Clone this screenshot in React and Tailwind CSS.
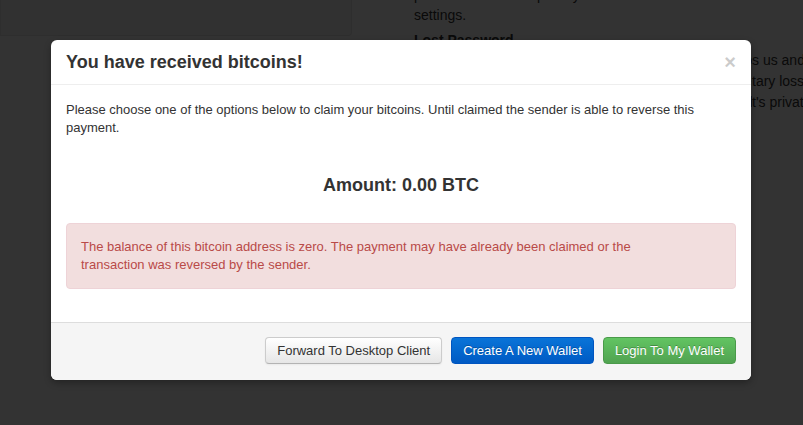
const hiddenLines = [
  { head: 'We do not store your password. If you lose it and the owner contact', tail: 's us and we cannot help' },
  { head: 'We cannot be held liable for any funds lost or any other mone', tail: 'tary loss' },
  { head: 'that occurs as a result of you losing access to your walle', tail: "t's private key" },
];

export default function App() {
  return (
    <div className="relative h-[425px] w-full overflow-hidden bg-white font-['Liberation_Sans',Arial,sans-serif] text-[#333]">
      {/* page behind the dialog */}
      <div className="flex items-start">
        <div className="h-[36px] w-[352px] shrink-0 rounded-br border border-t-0 border-[#e3e3e3] bg-[#f5f5f5]" />
        <div className="ml-[62px] -mt-[15px] shrink-0 whitespace-nowrap text-[14px] leading-[20px]">
          <p>provide reasonable proof you are the account owner we will reset your two factor</p>
          <p>settings.</p>
          <p className="mt-[5px] font-bold">Lost Password</p>
          <div className="leading-[21px]">
            {hiddenLines.map(({ head, tail }) => (
              <div key={tail} className="flex">
                <span className="w-[338px] shrink-0 overflow-hidden">{head}</span>
                <span>{tail}</span>
              </div>
            ))}
          </div>
        </div>
      </div>

      {/* backdrop */}
      <div className="absolute inset-0 bg-black/80" />

      {/* dialog */}
      <div className="absolute left-[51px] top-[40px] w-[700px] rounded-md bg-white shadow-[0_3px_7px_rgba(0,0,0,0.3)]">
        <div className="flex items-center justify-between border-b border-[#eee] px-[15px] py-[7px]">
          <h3 className="text-[18px] font-bold leading-[30px] text-[#333]">You have received bitcoins!</h3>
          <button className="text-[20px] font-bold leading-[20px] text-black opacity-20">×</button>
        </div>

        <div className="px-[15px] pt-4 pb-[33px] text-[13px] leading-[18px]">
          <p>
            Please choose one of the options below to claim your bitcoins. Until claimed the sender is able to reverse this
            payment.
          </p>
          <p className="mt-[38px] text-center text-[18px] font-bold leading-[20px]">Amount: 0.00 BTC</p>
          <div className="mt-[28px] rounded border border-[#eed3d7] bg-[#f2dede] py-[14px] pl-[14px] pr-[70px] text-[#b94a48]">
            The balance of this bitcoin address is zero. The payment may have already been claimed or the transaction was
            reversed by the sender.
          </div>
        </div>

        <div className="flex justify-end gap-[9px] rounded-b-md border-t border-[#ddd] bg-[#f5f5f5] px-[15px] pt-[14px] pb-[16px] text-[13px] leading-[17px]">
          <button className="rounded border border-[#ccc] border-b-[#b3b3b3] bg-gradient-to-b from-white to-[#e6e6e6] px-[11px] py-[4px] text-[#333] shadow-[inset_0_1px_0_rgba(255,255,255,0.2),0_1px_2px_rgba(0,0,0,0.05)]">
            Forward To Desktop Client
          </button>
          <button className="rounded border border-[#0055c0] bg-gradient-to-b from-[#0a74d8] to-[#005ac4] px-[11px] py-[4px] text-white [text-shadow:0_-1px_0_rgba(0,0,0,0.25)]">
            Create A New Wallet
          </button>
          <button className="rounded border border-[#4a9a4a] bg-gradient-to-b from-[#62c462] to-[#51a351] px-[11px] py-[4px] text-white [text-shadow:0_-1px_0_rgba(0,0,0,0.25)]">
            Login To My Wallet
          </button>
        </div>
      </div>
    </div>
  );
}
